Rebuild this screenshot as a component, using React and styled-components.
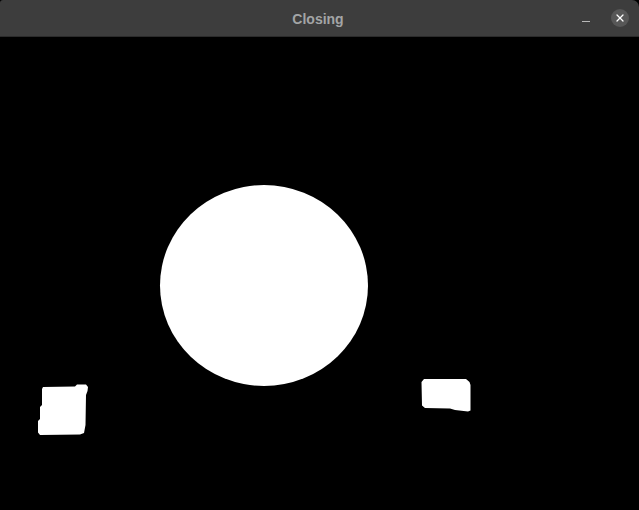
import React from 'react'
import styled, { createGlobalStyle } from 'styled-components'
import { X } from 'lucide-react'

const GlobalStyle = createGlobalStyle`
  html, body {
    margin: 0;
    padding: 0;
    background: #000;
  }
`

const App = () => (
  <Window>
    <GlobalStyle />
    <TitleBar>
      <Spacer />
      <Title>Closing</Title>
      <Controls>
        <Minimize />
        <CloseButton>
          <X size={12} strokeWidth={2.6} color="#ffffff" />
        </CloseButton>
      </Controls>
    </TitleBar>
    <Canvas>
      <svg width="639" height="473" viewBox="0 37 639 473">
        <ellipse cx="264" cy="285.5" rx="104" ry="100.5" fill="#fff" />
        <polygon
          points="43,387 75,386.5 77,384.5 86,384.5 88,387 87.5,391 86,395 85.5,425 84,433 80,434.5 40,435 38,432.5 38,421 40,419 40,407 42,405 42,389"
          fill="#fff"
        />
        <polygon
          points="424,379 466,379 469.5,382 470.5,385 470.5,410.5 468,411.5 455,410 450,408.5 425,408 422,405.5 421.5,382"
          fill="#fff"
        />
      </svg>
    </Canvas>
  </Window>
)

export default App

const Window = styled.div`
  width: 639px;
  height: 510px;
  display: flex;
  flex-direction: column;
  background: #000;
  overflow: hidden;
`

const TitleBar = styled.div`
  height: 36px;
  flex-shrink: 0;
  display: grid;
  grid-template-columns: 1fr auto 1fr;
  align-items: center;
  background: #3d3d3d;
  border-bottom: 1px solid #2b2b2b;
  border-radius: 3px 7px 0 0;
`

const Spacer = styled.div``

const Title = styled.div`
  font-family: 'Liberation Sans', Arial, sans-serif;
  font-weight: bold;
  font-size: 14px;
  color: #a3a5a6;
  padding-top: 1px;
  margin-left: -3px;
`

const Controls = styled.div`
  display: flex;
  align-items: center;
  justify-content: flex-end;
  gap: 21px;
  padding-right: 10px;
`

const Minimize = styled.div`
  width: 8px;
  height: 1px;
  background: #b8b8b8;
  margin-top: 6px;
`

const CloseButton = styled.div`
  width: 18px;
  height: 18px;
  border-radius: 50%;
  background: #575757;
  display: flex;
  align-items: center;
  justify-content: center;
`

const Canvas = styled.div`
  flex: 1;
  background: #000;
  svg {
    display: block;
  }
`
